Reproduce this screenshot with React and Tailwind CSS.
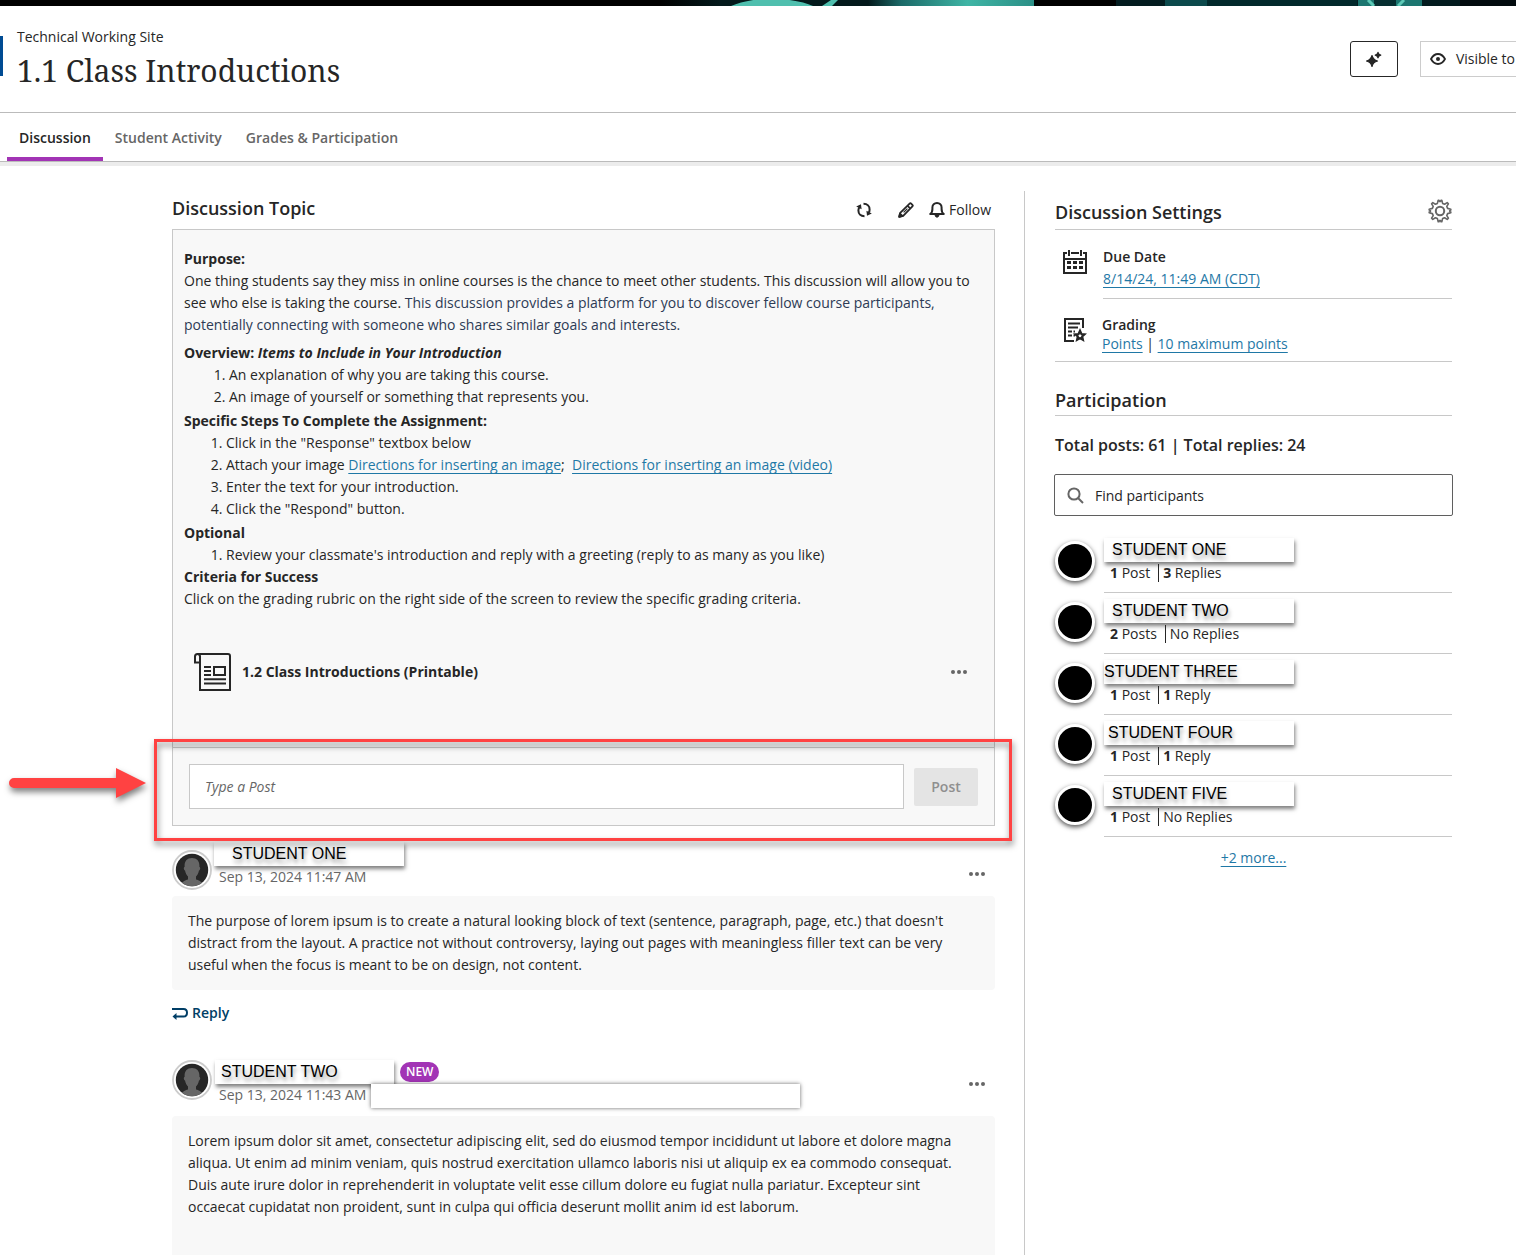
import React from "react";

const link = "text-[#1f78a6] underline decoration-1 underline-offset-[3px]";

const participants = [
  { name: "STUDENT ONE", pad: "pl-2", n: "1", posts: "Post", r: "3", replies: "Replies" },
  { name: "STUDENT TWO", pad: "pl-2", n: "2", posts: "Posts", r: "", replies: "No Replies" },
  { name: "STUDENT THREE", pad: "pl-0", n: "1", posts: "Post", r: "1", replies: "Reply" },
  { name: "STUDENT FOUR", pad: "pl-1", n: "1", posts: "Post", r: "1", replies: "Reply" },
  { name: "STUDENT FIVE", pad: "pl-2", n: "1", posts: "Post", r: "", replies: "No Replies" },
];

function Banner() {
  return (
    <svg className="block h-1.5 w-full bg-black" viewBox="0 0 1516 6" preserveAspectRatio="none" aria-hidden="true">
      <defs>
        <linearGradient id="mid" x1="0" x2="1" y1="0" y2="0">
          <stop offset="0" stopColor="#03191b" />
          <stop offset="0.2" stopColor="#1b6a68" />
          <stop offset="0.6" stopColor="#3fb5a5" />
          <stop offset="1" stopColor="#2b8f86" />
        </linearGradient>
        <linearGradient id="lead" x1="0" x2="1" y1="0" y2="0">
          <stop offset="0" stopColor="#000" />
          <stop offset="1" stopColor="#03191b" />
        </linearGradient>
      </defs>
      <rect x="660" width="60" height="6" fill="url(#lead)" />
      <rect x="720" width="314" height="6" fill="#03191b" />
      <path d="M731 6 Q745 0 770 -2 Q800 0 813 6Z" fill="#4fbfae" />
      <path d="M822 6 L831 0 H838 L832 6Z" fill="#4fbfae" />
      <rect x="868" width="166" height="6" fill="url(#mid)" />
      <rect x="1116" width="400" height="6" fill="#031c1f" />
      <rect x="1165" width="42" height="6" fill="#0c4a4c" />
      <rect x="1207" width="150" height="6" fill="#02292b" />
      <rect x="1358" width="64" height="6" fill="#1c7670" />
      <rect x="1374" width="22" height="6" fill="#062f31" />
      <path d="M1368 0 L1374 6 M1398 6 L1404 0" stroke="#5cc9b6" strokeWidth="3" />
      <rect x="1460" width="56" height="6" fill="#020b0e" />
    </svg>
  );
}

function Dots() {
  return (
    <svg width="16" height="4" viewBox="0 0 16 4" fill="#666" aria-hidden="true">
      <circle cx="2" cy="2" r="2" />
      <circle cx="8" cy="2" r="2" />
      <circle cx="14" cy="2" r="2" />
    </svg>
  );
}

function SparkleIcon() {
  return (
    <svg width="16" height="16" viewBox="0 0 16 16" fill="#262626" aria-hidden="true">
      <path d="M6 4.5 Q7 9 11.5 10 Q7 11 6 15.5 Q5 11 0.5 10 Q5 9 6 4.5Z" stroke="#262626" strokeWidth="1.2" strokeLinejoin="round" />
      <path d="M12 1.4 Q12.5 3.8 14.8 4.1 Q12.5 4.5 12 6.8 Q11.5 4.5 9.2 4.1 Q11.5 3.8 12 1.4Z" stroke="#262626" strokeWidth="1.2" strokeLinejoin="round" />
    </svg>
  );
}

function EyeIcon() {
  return (
    <svg width="16" height="12" viewBox="0 0 16 12" aria-hidden="true">
      <path d="M1 6 C3 2.4 5.4 1 8 1 C10.6 1 13 2.4 15 6 C13 9.6 10.6 11 8 11 C5.4 11 3 9.6 1 6Z" fill="none" stroke="#262626" strokeWidth="1.8" />
      <circle cx="8" cy="6" r="2" fill="#262626" />
    </svg>
  );
}

function SyncIcon() {
  return (
    <svg width="16" height="16" viewBox="0 0 16 16" fill="none" stroke="#262626" strokeWidth="2" aria-hidden="true">
      <path d="M7.5 1.8 C11.5 1.8 13.6 4.4 13.6 7.4 C13.6 8.6 13.4 9.6 12.8 10.6" />
      <path d="M8.5 14.2 C4.5 14.2 2.4 11.6 2.4 8.6 C2.4 7.4 2.6 6.4 3.2 5.4" />
      <path d="M10.4 8.8 L15.8 11.4 L11 13.8Z" fill="#262626" stroke="none" />
      <path d="M5.6 7.2 L0.2 4.6 L5 2.2Z" fill="#262626" stroke="none" />
    </svg>
  );
}

function PencilIcon() {
  return (
    <svg width="16" height="16" viewBox="0 0 16 16" fill="none" stroke="#262626" strokeWidth="1.8" strokeLinejoin="round" aria-hidden="true">
      <path d="M1.2 14.8 L2.2 10.8 L11.6 1.6 Q12.4 0.8 13.2 1.6 L14.4 2.8 Q15.2 3.6 14.4 4.4 L5.2 13.8Z" />
      <path d="M9.6 3.8 L12.2 6.4" />
      <path d="M5.6 10.4 L9.4 6.6" strokeWidth="1.2" />
      <path d="M1.2 14.8 L2 11.6 L4.4 14Z" fill="#262626" />
    </svg>
  );
}

function BellIcon() {
  return (
    <svg width="16" height="16" viewBox="0 0 16 16" fill="none" stroke="#262626" strokeWidth="2" strokeLinejoin="round" aria-hidden="true">
      <path d="M1.2 12 C3 10.8 3.4 9.6 3.4 7 V5.6 C3.4 2.8 5.4 1 8 1 C10.6 1 12.6 2.8 12.6 5.6 V7 C12.6 9.6 13 10.8 14.8 12Z" />
      <path d="M6 13 Q6.4 15.2 8 15.2 Q9.6 15.2 10 13Z" fill="#262626" strokeWidth="1" />
    </svg>
  );
}

function GearIcon() {
  return (
    <svg width="24" height="24" viewBox="0 0 24 24" fill="none" stroke="#666" strokeWidth="2" strokeLinejoin="round" aria-hidden="true">
      <circle cx="12" cy="12" r="4.2" />
      <path d="M9.4 4.4 L10.2 1.2 H11 Q12 4 13 1.2 H13.8 L14.6 4.4 L16.6 5.2 L19.2 3.6 L20.4 4.8 L18.8 7.4 L19.6 9.4 L22.8 10.2 V11 Q20.4 12 22.8 13 V13.8 L19.6 14.6 L18.8 16.6 L20.4 19.2 L19.2 20.4 L16.6 18.8 L14.6 19.6 L13.8 22.8 H13 Q12 20 11 22.8 H10.2 L9.4 19.6 L7.4 18.8 L4.8 20.4 L3.6 19.2 L5.2 16.6 L4.4 14.6 L1.2 13.8 V13 Q4 12 1.2 11 V10.2 L4.4 9.4 L5.2 7.4 L3.6 4.8 L4.8 3.6 L7.4 5.2Z" strokeWidth="1.6" />
    </svg>
  );
}

function CalendarIcon() {
  return (
    <svg width="24" height="24" viewBox="0 0 24 24" fill="none" stroke="#262626" strokeWidth="2" aria-hidden="true">
      <path d="M4 3 H1 V23 H23 V3 H20 M8 3 H16 M6 0 V6 M18 0 V6 M1 9 H23" />
      <path d="M4 12.5 H8 M10 12.5 H14 M16 12.5 H20 M4 17.5 H8 M10 17.5 H14 M16 17.5 H20" strokeWidth="3" />
    </svg>
  );
}

function GradingIcon() {
  return (
    <svg width="24" height="24" viewBox="0 0 24 24" fill="none" stroke="#262626" strokeWidth="2" aria-hidden="true">
      <path d="M11 23 H2 V1 H20 V10" />
      <path d="M5 5.5 H17 M5 9.5 H15 M5 13.5 H9 M10.5 13.5 H12 M5 17.5 H9 M10.5 17.5 H12" />
      <path d="M17 12.8 L18.4 16 L21.6 16.3 L19.2 18.5 L19.9 21.8 L17 20.1 L14.1 21.8 L14.8 18.5 L12.4 16.3 L15.6 16Z" strokeWidth="2.2" />
    </svg>
  );
}

function DocumentIcon() {
  return (
    <svg width="38" height="38" viewBox="0 0 38 38" fill="none" stroke="#262626" strokeWidth="2" aria-hidden="true">
      <path d="M6 9.5 H1 V3.5 Q1 1 3.5 1 H34 Q36 1 36 3 V37 H6 V3.5 Q6 1 3.5 1" />
      <path d="M10 14 H17 M10 18 H17 M10 22 H17 M10 26.2 H32 M10 30.4 H32" />
      <path d="M20 14 H31 V22 H20Z" />
    </svg>
  );
}

function ReplyIcon() {
  return (
    <svg width="16" height="13" viewBox="0 0 16 13" fill="none" stroke="#003e66" strokeWidth="2" aria-hidden="true">
      <path d="M0 2 H11.5 Q15 2 15 5.7 Q15 9.5 11.5 9.5 H3" />
      <path d="M0.5 9.5 L4.5 6 V13Z" fill="#003e66" stroke="none" />
    </svg>
  );
}

function SilhouetteAvatar() {
  return (
    <svg className="shrink-0" width="40" height="40" viewBox="0 0 40 40" aria-hidden="true">
      <defs>
        <clipPath id="face">
          <circle cx="20" cy="20" r="16.2" />
        </clipPath>
      </defs>
      <circle cx="20" cy="20" r="19" fill="#fff" stroke="#ccc" strokeWidth="1.8" />
      <g clipPath="url(#face)">
        <rect width="40" height="40" fill="#262626" />
        <path d="M20 8 C24.8 8 27.4 11 27.4 15.5 V17 C28.6 17 28.4 20 27 20.6 C26.4 23.6 25.2 25.4 24 26.6 V29.5 C27 30.6 31 31 32 38 H8 C9 31 13 30.6 16 29.5 V26.6 C14.8 25.4 13.6 23.6 13 20.6 C11.6 20 11.4 17 12.6 17 V15.5 C12.6 11 15.2 8 20 8Z" fill="#666" />
      </g>
    </svg>
  );
}

function NameLabel({ className, children }) {
  return (
    <div className={`flex items-center bg-white font-['Liberation_Sans',Arial,sans-serif] text-base text-black shadow-[1px_3px_4px_rgba(0,0,0,0.5)] [text-shadow:1px_4px_4px_rgba(0,0,0,0.4)] ${className}`}>
      {children}
    </div>
  );
}

function PointerArrow() {
  return (
    <svg className="absolute top-[19px] right-full mr-[27px] overflow-visible drop-shadow-[1px_4px_3px_rgba(0,0,0,0.5)]" width="137" height="32" viewBox="0 0 137 32" aria-hidden="true">
      <path d="M5 11 H107 V1 L137 16 L107 31 V21 H5 A5 5 0 0 1 5 11Z" fill="#ff4242" />
    </svg>
  );
}

function Tab({ active, children }) {
  return (
    <button
      role="tab"
      aria-selected={active}
      className={
        active
          ? "border-b-4 border-[#a234b5] px-3 pt-1.5 font-semibold text-[#262626]"
          : "border-b-4 border-transparent px-3 pt-1.5 font-semibold text-[#666]"
      }
    >
      {children}
    </button>
  );
}

function Topic() {
  return (
    <div className="border border-b-0 border-[#c8c8c8] bg-[#f8f8f8] px-[11px] pt-[18px] pb-[55px] leading-[22px]">
      <p>
        <strong>Purpose:</strong>
        <br />
        One thing students say they miss in online courses is the chance to meet other students. This discussion will
        allow you to see who else is taking the course.{" "}
        <span className="text-[#2d3b55]">
          This discussion provides a platform for you to discover fellow course participants, potentially connecting
          with someone who shares similar goals and interests.
        </span>
      </p>
      <div className="mt-1.5 flex flex-col gap-0.5">
        <section>
          <h3 className="font-bold">
            Overview: <em>Items to Include in Your Introduction</em>
          </h3>
          <ol className="list-decimal pl-[45px]">
            <li>An explanation of why you are taking this course.</li>
            <li>An image of yourself or something that represents you.</li>
          </ol>
        </section>
        <section>
          <h3 className="font-bold">Specific Steps To Complete the Assignment:</h3>
          <ol className="list-decimal pl-[42px]">
            <li>Click in the "Response" textbox below</li>
            <li>
              Attach your image <a href="#image" className={link}>Directions for inserting an image</a>;&nbsp;{" "}
              <a href="#video" className={link}>Directions for inserting an image (video)</a>
            </li>
            <li>Enter the text for your introduction.</li>
            <li>Click the "Respond" button.</li>
          </ol>
        </section>
        <section>
          <h3 className="font-bold">Optional</h3>
          <ol className="list-decimal pl-[42px]">
            <li>Review your classmate's introduction and reply with a greeting (reply to as many as you like)</li>
          </ol>
          <h3 className="font-bold">Criteria for Success</h3>
          <p>Click on the grading rubric on the right side of the screen to review the specific grading criteria.</p>
        </section>
      </div>
      <div className="mt-[42px] flex h-10 items-center pr-4 pl-2.5">
        <DocumentIcon />
        <span className="ml-2.5 flex-1 font-bold">1.2 Class Introductions (Printable)</span>
        <button aria-label="More options for attachment">
          <Dots />
        </button>
      </div>
    </div>
  );
}

function Composer() {
  return (
    <form className="relative flex items-center gap-2.5 border border-[#c8c8c8] bg-[#f8f8f8] p-4">
      <input
        aria-label="Type a Post"
        placeholder="Type a Post"
        className="h-[45px] min-w-0 flex-1 border border-[#c8c8c8] bg-white px-[15px] placeholder:text-[#666] placeholder:italic"
      />
      <button type="button" className="h-[38px] w-16 rounded-xs bg-[#e4e4e4] font-semibold text-[#8f8f8f]">
        Post
      </button>
      <div className="pointer-events-none absolute -top-[9px] -right-[18px] -bottom-4 -left-[19px] z-10 border-3 border-[#ff4242] drop-shadow-[1px_4px_3px_rgba(0,0,0,0.5)]" />
      <PointerArrow />
    </form>
  );
}

function Settings() {
  return (
    <section>
      <div className="flex h-[39px] items-center justify-between border-b border-[#c8c8c8]">
        <h2 className="pt-1 text-lg font-semibold">Discussion Settings</h2>
        <button aria-label="Settings" className="pt-0.5">
          <GearIcon />
        </button>
      </div>
      <div className="flex pl-2">
        <div className="w-10 pt-5">
          <CalendarIcon />
        </div>
        <div className="flex-1 border-b border-[#c8c8c8] pt-4 pb-2 leading-[22px]">
          <h3 className="font-semibold">Due Date</h3>
          <a href="#due" className={link}>8/14/24, 11:49 AM (CDT)</a>
        </div>
      </div>
      <div className="flex border-b border-[#c8c8c8] pt-4 pb-2 pl-2 leading-[19px]">
        <div className="w-[39px] pt-[3px]">
          <GradingIcon />
        </div>
        <div>
          <h3 className="font-semibold">Grading</h3>
          <a href="#points" className={link}>Points</a> | <a href="#max" className={link}>10 maximum points</a>
        </div>
      </div>
    </section>
  );
}

function Participation() {
  return (
    <section className="mt-6">
      <h2 className="border-b border-[#c8c8c8] pb-px text-lg font-semibold">Participation</h2>
      <p className="mt-[17px] text-base font-semibold">Total posts: 61 | Total replies: 24</p>
      <label className="mt-[17px] -mx-px flex h-[42px] items-center rounded-xs border border-[#5f5f5f] pl-3">
        <svg width="17" height="17" viewBox="0 0 17 17" fill="none" stroke="#666" strokeWidth="2" aria-hidden="true">
          <circle cx="7" cy="7" r="5.6" />
          <path d="M11 11 L16 16" />
        </svg>
        <input
          aria-label="Find participants"
          placeholder="Find participants"
          className="ml-[11px] h-full min-w-0 flex-1 outline-none placeholder:text-[#262626]"
        />
      </label>
      <ul className="mt-4">
        {participants.map((p) => (
          <li key={p.name} className="flex h-[61px] gap-[9px]">
            <div className="mt-[9px] size-10 shrink-0 rounded-full border-[3px] border-white bg-black shadow-[0px_2px_5px_rgba(0,0,0,0.7)]" />
            <div className="flex-1 border-b border-[#c8c8c8] pt-1.5">
              <NameLabel className={`h-6 w-[190px] ${p.pad}`}>{p.name}</NameLabel>
              <div className="mt-0.5 flex pl-1.5 leading-[18px]">
                <span className="border-r border-[#262626] pr-2">
                  <strong>{p.n}</strong> {p.posts}
                </span>
                <span className="pl-1">
                  <strong>{p.r}</strong> {p.replies}
                </span>
              </div>
            </div>
          </li>
        ))}
      </ul>
      <p className="mt-2.5 text-center leading-[22px]">
        <a href="#more" className={link}>+2 more...</a>
      </p>
    </section>
  );
}

export default function App() {
  return (
    <div className="min-h-screen overflow-x-hidden bg-white font-['Open_Sans','Noto_Sans',sans-serif] text-sm text-[#262626]">
      <Banner />
      <header className="flex h-[107px] justify-between border-b border-[#bbb]">
        <div className="flex">
          <div className="mt-[30px] h-10 w-[3px] bg-[#004b93]" />
          <div className="pt-5 pl-3.5">
            <p className="leading-[22px]">Technical Working Site</p>
            <h1 className="font-['Noto_Serif','DejaVu_Serif',serif] text-[30px] leading-[46px]">1.1 Class Introductions</h1>
          </div>
        </div>
        <div className="flex gap-[22px] pt-[35px]">
          <button aria-label="AI assistant" className="flex h-9 w-12 items-center justify-center rounded-[3px] border border-[#262626]">
            <SparkleIcon />
          </button>
          <button className="flex h-9 items-center gap-2.5 border border-r-0 border-[#ccc] pr-px pl-[9px] whitespace-nowrap">
            <EyeIcon />
            Visible to
          </button>
        </div>
      </header>
      <nav role="tablist" className="flex h-[49px] border-b border-[#bbb] pl-[7px]">
        <Tab active>Discussion</Tab>
        <Tab>Student Activity</Tab>
        <Tab>Grades &amp; Participation</Tab>
      </nav>
      <div className="h-1 bg-[#ececec]" />
      <div className="flex pt-[25px] pr-16 pl-[172px]">
        <main className="min-w-0 flex-1 pr-[29px]">
          <div className="flex h-[38px] items-center">
            <h2 className="flex-1 pb-1 text-lg font-semibold">Discussion Topic</h2>
            <button aria-label="Refresh" className="mr-[26px]">
              <SyncIcon />
            </button>
            <button aria-label="Edit" className="mr-[15px]">
              <PencilIcon />
            </button>
            <button className="mr-1 flex items-center gap-1">
              <BellIcon />
              Follow
            </button>
          </div>
          <Topic />
          <Composer />

          <article>
            <div className="flex h-[70px] pt-6">
              <SilhouetteAvatar />
              <div className="ml-0.5 flex-1">
                <NameLabel className="-mt-2 h-6 w-[190px] pl-[18px]">STUDENT ONE</NameLabel>
                <p className="pl-[5px] leading-[22px] text-[#666]">Sep 13, 2024 11:47 AM</p>
              </div>
              <button aria-label="More options" className="mt-1.5 mr-2.5 h-9 self-start">
                <Dots />
              </button>
            </div>
            <p className="rounded-sm bg-[#f8f8f8] px-4 py-3.5 pr-10 leading-[22px]">
              The purpose of lorem ipsum is to create a natural looking block of text (sentence, paragraph, page, etc.)
              that doesn't distract from the layout. A practice not without controversy, laying out pages with
              meaningless filler text can be very useful when the focus is meant to be on design, not content.
            </p>
            <button className="mt-3 flex items-center gap-1 leading-[22px] font-semibold text-[#003e66]">
              <ReplyIcon />
              Reply
            </button>
          </article>

          <article className="mt-9">
            <div className="flex h-14">
              <SilhouetteAvatar />
              <div className="relative ml-[3px] flex-1">
                <div className="flex items-center gap-1.5">
                  <NameLabel className="h-6 w-[179px] pl-1.5">STUDENT TWO</NameLabel>
                  <span className="rounded-full bg-[#a234b5] px-1.5 text-xs leading-5 font-semibold text-white">NEW</span>
                </div>
                <p className="pl-1 leading-[22px] text-[#666]">Sep 13, 2024 11:43 AM</p>
                <div className="absolute top-6 left-[156px] h-6 w-[429px] bg-white shadow-[0px_0px_4px_rgba(0,0,0,0.6)]" />
              </div>
              <button aria-label="More options" className="mt-1.5 mr-2.5 h-9 self-start">
                <Dots />
              </button>
            </div>
            <p className="rounded-t-sm bg-[#f8f8f8] px-4 pt-3.5 pb-[37px] leading-[22px]">
              Lorem ipsum dolor sit amet, consectetur adipiscing elit, sed do eiusmod tempor incididunt ut labore et
              dolore magna aliqua. Ut enim ad minim veniam, quis nostrud exercitation ullamco laboris nisi ut aliquip
              ex ea commodo consequat. Duis aute irure dolor in reprehenderit in voluptate velit esse cillum dolore eu
              fugiat nulla pariatur. Excepteur sint occaecat cupidatat non proident, sunt in culpa qui officia
              deserunt mollit anim id est laborum.
            </p>
          </article>
        </main>
        <aside className="w-[428px] shrink-0 border-l border-[#c8c8c8] pl-[30px]">
          <Settings />
          <Participation />
        </aside>
      </div>
    </div>
  );
}
